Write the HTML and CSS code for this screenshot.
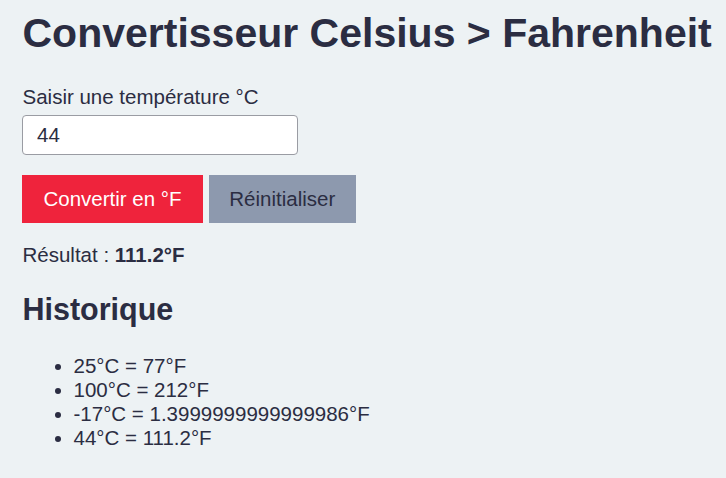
FILE: index.html
```html
<!DOCTYPE html>
<html lang="fr">
<head>
<meta charset="utf-8">
<title>Convertisseur Celsius &gt; Fahrenheit</title>
<link rel="stylesheet" href="styles.css">
</head>
<body>
<main class="app">
  <h1 class="title">Convertisseur Celsius &gt; Fahrenheit</h1>
  <label class="field-label" for="temp">Saisir une température °C</label>
  <input class="field-input" id="temp" type="text" value="44">
  <div class="actions">
    <button class="btn btn-primary" type="button">Convertir en °F</button>
    <button class="btn btn-secondary" type="button">Réinitialiser</button>
  </div>
  <p class="result">Résultat : <strong>111.2°F</strong></p>
  <h2 class="subtitle">Historique</h2>
  <ul class="history">
    <li>25°C = 77°F</li>
    <li>100°C = 212°F</li>
    <li>-17°C = 1.3999999999999986°F</li>
    <li>44°C = 111.2°F</li>
  </ul>
</main>
</body>
</html>
```
FILE: styles.css
```css
html, body {
  margin: 0;
  background: #edf2f4;
}
body {
  color: #2b2d42;
  font-family: "Liberation Sans", Arial, sans-serif;
  font-size: 20.5px;
}
.app {
  padding: 9.5px 0 20px 22.5px;
}
.title {
  font-size: 41px;
  font-weight: bold;
  margin: 0 0 28.5px;
  white-space: nowrap;
}
.field-label {
  display: block;
  margin-bottom: 6px;
}
.field-input {
  display: block;
  box-sizing: border-box;
  width: 276px;
  height: 40px;
  margin-left: -0.5px;
  border: 1px solid #9a9ca3;
  border-radius: 4px;
  padding: 0 14px;
  font: inherit;
  color: #2b2d42;
  background: #fff;
  outline: none;
}
.actions {
  margin-top: 19.5px;
  margin-left: -0.5px;
}
.btn {
  height: 48px;
  border: 0;
  border-radius: 0;
  padding: 0 21.5px;
  font: inherit;
  vertical-align: top;
  cursor: pointer;
}
.btn-primary {
  background: #ef233c;
  color: #fff;
}
.btn-secondary {
  background: #8d99ae;
  color: #2b2d42;
  padding: 0 20.5px;
}
.result {
  margin: 20.5px 0 0;
}
.subtitle {
  font-size: 30.5px;
  font-weight: bold;
  margin: 25px 0 27px;
}
.history {
  margin: 0;
  padding-left: 51px;
}
```
